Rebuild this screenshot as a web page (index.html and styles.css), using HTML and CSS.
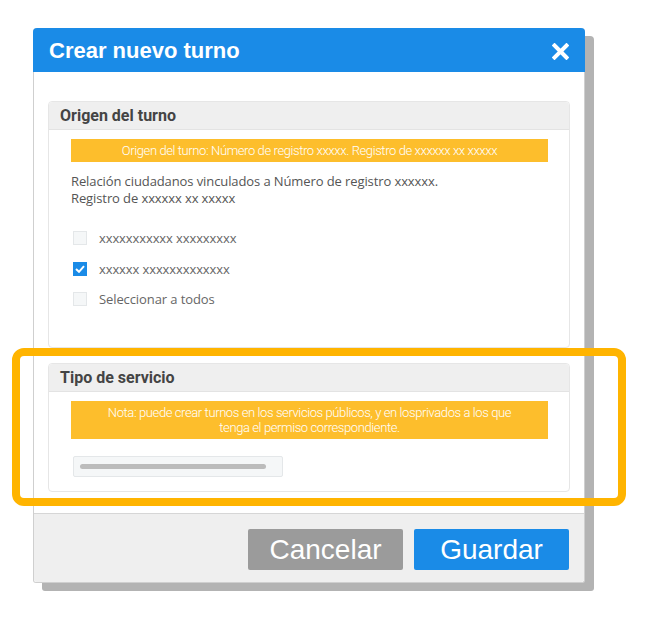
FILE: index.html
```html
<!DOCTYPE html>
<html lang="es">
<head>
    <meta charset="UTF-8">
    <meta name="viewport" content="width=device-width, initial-scale=1.0">
    <title>Crear nuevo turno</title>
    <link rel="stylesheet" href="styles.css">
</head>
<body>
    <div class="page">
        <div class="dialog">
            <div class="dialog-header">
                <h1>Crear nuevo turno</h1>
                <button class="close-button" aria-label="Cerrar">
                    <svg width="17" height="17" viewBox="0 0 17 17">
                        <path d="M2.5 2.5 L14.5 14.5 M14.5 2.5 L2.5 14.5" stroke="#fff" stroke-width="4" stroke-linecap="square" fill="none"/>
                    </svg>
                </button>
            </div>

            <div class="dialog-body">
                <div class="panel panel-origen">
                    <div class="panel-header">Origen del turno</div>
                    <div class="panel-content">
                        <div class="notice">Origen del turno: Número de registro xxxxx. Registro de xxxxxx xx xxxxx</div>
                        <p class="relation">Relación ciudadanos vinculados a Número de registro xxxxxx.<br>Registro de xxxxxx xx xxxxx</p>

                        <ul class="check-list">
                            <li><span class="checkbox"></span>xxxxxxxxxxx xxxxxxxxx</li>
                            <li><span class="checkbox checked">
                                <svg width="10" height="8" viewBox="0 0 10 8"><path d="M1 4 L4 6.8 L9 1.2" stroke="#fff" stroke-width="2" fill="none"/></svg>
                            </span>xxxxxx xxxxxxxxxxxxx</li>
                            <li><span class="checkbox"></span>Seleccionar a todos</li>
                        </ul>
                    </div>
                </div>

                <div class="panel panel-servicio">
                    <div class="panel-header">Tipo de servicio</div>
                    <div class="panel-content">
                        <div class="notice notice-tall">Nota: puede crear turnos en los servicios públicos, y en losprivados a los que<br>tenga el permiso correspondiente.</div>
                        <div class="select-box"><span class="select-bar"></span></div>
                    </div>
                </div>
            </div>

            <div class="dialog-footer">
                <button class="btn btn-cancel">Cancelar</button>
                <button class="btn btn-save">Guardar</button>
            </div>
        </div>

        <div class="highlight"></div>
    </div>
</body>
</html>
```

FILE: styles.css
```css
body {
    margin: 0;
    background-color: #fff;
    font-family: "Liberation Sans", Arial, sans-serif;
}
.page {
    position: relative;
    width: 645px;
    height: 642px;
    padding: 28px 0 0 33px;
    box-sizing: border-box;
}
.dialog {
    width: 550px;
    background-color: #fff;
    border: 1px solid #cfcfcf;
    border-top: none;
    border-radius: 4px 4px 3px 3px;
    box-shadow: 9px 8px 0 #b3b3b3;
}
.dialog-header {
    display: flex;
    align-items: center;
    justify-content: space-between;
    height: 44px;
    margin: 0 -1px;
    padding: 2px 16px 0 16px;
    box-sizing: border-box;
    background-color: #1a8be7;
    border-radius: 4px 4px 0 0;
}
.dialog-header h1 {
    margin: 0;
    color: #fff;
    font-size: 22px;
    font-weight: bold;
}
.close-button {
    background: none;
    border: none;
    padding: 0;
    display: flex;
    cursor: pointer;
}
.dialog-body {
    padding: 29px 14px 21px 14px;
}
.panel {
    border: 1px solid #e6e6e6;
    border-radius: 4px;
    background-color: #fff;
}
.panel + .panel {
    margin-top: 15px;
}
.panel-header {
    height: 27px;
    line-height: 27px;
    padding-left: 11px;
    background-color: #efefef;
    border-bottom: 1px solid #e3e3e3;
    border-radius: 4px 4px 0 0;
    color: #444;
    font-family: Roboto, "Liberation Sans", sans-serif;
    font-weight: bold;
    font-size: 16px;
}
.panel-content {
    padding: 9px 21px 0 22px;
}
.panel-origen .panel-content {
    height: 217px;
    box-sizing: border-box;
}
.panel-servicio .panel-content {
    padding-bottom: 14px;
}
.notice {
    background-color: #fdbe2c;
    color: #fff;
    font-family: Roboto, sans-serif;
    font-weight: 300;
    font-size: 13px;
    letter-spacing: -0.4px;
    text-align: center;
    height: 23px;
    line-height: 23px;
}
.notice-tall {
    height: 38px;
    line-height: 15px;
    padding-top: 4px;
    box-sizing: border-box;
}
.relation {
    margin: 11px 0 0 0;
    color: #555;
    font-family: "Open Sans", sans-serif;
    font-size: 13px;
    line-height: 17px;
    letter-spacing: -0.1px;
}
.check-list {
    list-style: none;
    margin: 16px 0 0 0;
    padding: 0;
}
.check-list li {
    display: flex;
    align-items: center;
    height: 30.5px;
    color: #666;
    font-family: "Open Sans", sans-serif;
    font-size: 13px;
    letter-spacing: -0.1px;
}
.checkbox {
    width: 14px;
    height: 14px;
    margin: 0 12px 0 2px;
    box-sizing: border-box;
    background-color: #f5f7f8;
    border: 1px solid #e4e7e9;
    display: flex;
    align-items: center;
    justify-content: center;
}
.checkbox.checked {
    background-color: #1a8be7;
    border-color: #1a8be7;
}
.select-box {
    width: 210px;
    height: 21px;
    margin: 17px 0 0 2px;
    box-sizing: border-box;
    background-color: #f5f7f8;
    border: 1px solid #e4e7e9;
    border-radius: 2px;
    display: flex;
    align-items: center;
    padding-left: 6px;
}
.select-bar {
    display: block;
    width: 186px;
    height: 5px;
    border-radius: 3px;
    background-color: #bcbcbc;
}
.dialog-footer {
    display: flex;
    justify-content: flex-end;
    gap: 11px;
    padding: 15px 15px 12px 0;
    background-color: #efefef;
    border-top: 1px solid #d6d6d6;
    border-radius: 0 0 3px 3px;
}
.btn {
    width: 155px;
    height: 41px;
    border: none;
    border-radius: 2px;
    color: #fff;
    font-family: "Liberation Sans", Arial, sans-serif;
    font-size: 28px;
    cursor: pointer;
}
.btn-cancel {
    background-color: #9b9b9b;
}
.btn-save {
    background-color: #1a8be7;
}
.highlight {
    position: absolute;
    left: 12px;
    top: 348px;
    width: 614px;
    height: 158px;
    box-sizing: border-box;
    border: 8px solid #ffb400;
    border-radius: 12px;
}
```
